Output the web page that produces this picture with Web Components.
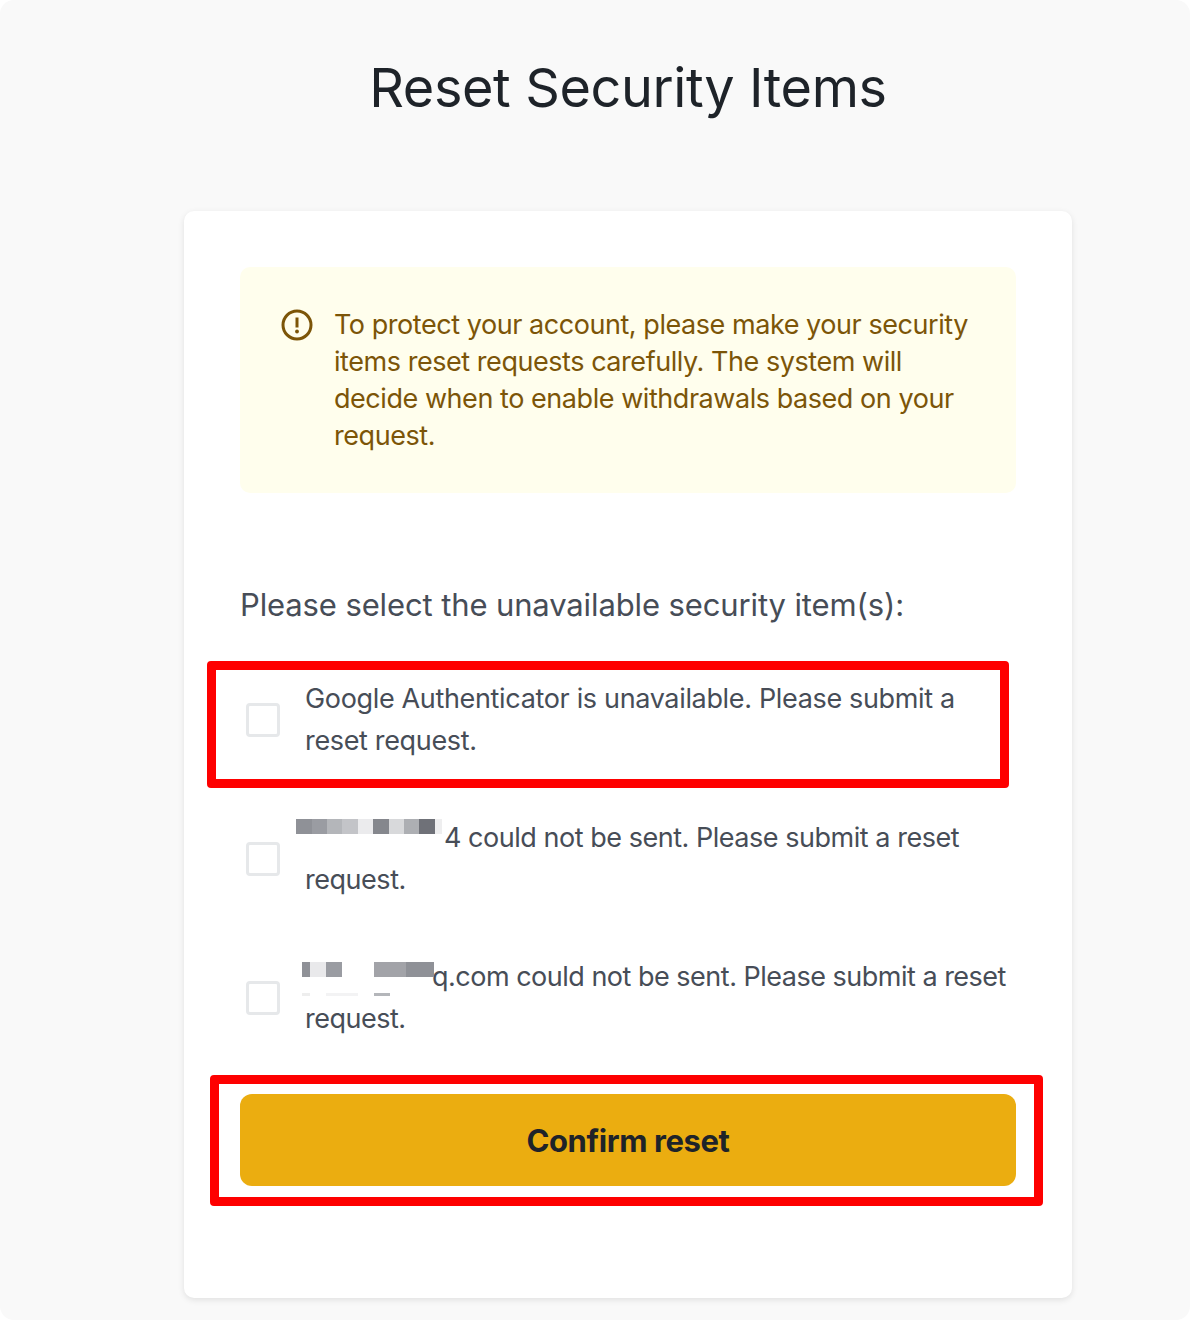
<!DOCTYPE html>
<html>
<head>
<meta charset="utf-8">
<title>Reset Security Items</title>
<style>
  html,body{margin:0;padding:0;background:#fff;}
  body{font-family:"Inter","Liberation Sans",sans-serif;}
</style>
</head>
<body>
<reset-page>
  <warning-box slot="warning">To protect your account, please make your security items reset requests carefully. The system will decide when to enable withdrawals based on your request.</warning-box>
  <option-row slot="option" marked>Google Authenticator is unavailable. Please submit a reset request.</option-row>
  <option-row slot="option" style="letter-spacing:-.47px"><pixel-blur cells="#8f9197:16,#9a9ca2:15,#b4b6ba:15,#c3c4c8:16,#ebebed:15,#85878d:16,#d8d9db:15,#adafb3:15,#6f7178:16,#eeeeef:7" width="139" offset="-9" top="-27"></pixel-blur>4 could not be sent. Please submit a reset request.</option-row>
  <option-row slot="option" style="letter-spacing:-.5px"><pixel-blur cells="#8f9197:8,#e9e9eb:16,#9a9ca2:16,#fff:32,#a2a3a8:32,#8f9197:28" low="#eee:8,#fff:16,#f3f3f4:32,#fff:16,#b4b6ba:16" width="127" offset="-3" top="-23"></pixel-blur>q.com could not be sent. Please submit a reset request.</option-row>
  <confirm-button slot="button" marked>Confirm reset</confirm-button>
</reset-page>

<script>
class ResetPage extends HTMLElement{
  constructor(){
    super();
    this.attachShadow({mode: 'open'});
  }
  connectedCallback(){
    this.shadowRoot.innerHTML = `
    <style>
      :host{
        display: block;
        width: 1190px;
        height: 1320px;
        box-sizing: border-box;
        background: #f9f9f9;
        border-radius: 14px;
        padding-left: 184px;
        overflow: hidden;
      }
      h1{
        width: 888px;
        margin: 0;
        height: 211px;
        box-sizing: border-box;
        padding-top: 54px;
        text-align: center;
        font-size: 54px;
        line-height: 68px;
        font-weight: 400;
        letter-spacing: -.4px;
        color: #1e2329;
      }
      .card{
        width: 888px;
        height: 1087px;
        box-sizing: border-box;
        padding: 56px;
        background: #fff;
        border-radius: 10px;
        box-shadow: 0 2px 6px rgba(0,0,0,.1);
      }
      p{
        margin: 0;
        padding: 92px 0 0;
        height: 185px;
        box-sizing: border-box;
        font-size: 31px;
        line-height: 40px;
        letter-spacing: -.12px;
        color: #474d57;
      }
      .items{
        display: flex;
        flex-direction: column;
        row-gap: 55px;
      }
      .btn{margin-top: 54px;}
    </style>
    <h1>Reset Security Items</h1>
    <div class="card">
      <slot name="warning"></slot>
      <p>Please select the unavailable security item(s):</p>
      <div class="items"><slot name="option"></slot></div>
      <div class="btn"><slot name="button"></slot></div>
    </div>`;
  }
}

class WarningBox extends HTMLElement{
  constructor(){
    super();
    this.attachShadow({mode: 'open'});
  }
  connectedCallback(){
    this.shadowRoot.innerHTML = `
    <style>
      :host{
        display: flex;
        height: 226px;
        box-sizing: border-box;
        padding: 39px 40px 0 42px;
        column-gap: 20px;
        background: #fffeed;
        border-radius: 10px;
        color: #7c5508;
        font-size: 27px;
        line-height: 37px;
        letter-spacing: -.45px;
      }
      svg{flex: none; width: 32px; height: 32px; margin-top: 3px; margin-left: -1px; margin-right: 1px;}
    </style>
    <svg viewBox="0 0 32 32" fill="none">
      <circle cx="16" cy="16" r="14" stroke="#7c5508" stroke-width="3"/>
      <path d="M16 8.5v10" stroke="#7c5508" stroke-width="3"/>
      <circle cx="16" cy="22.5" r="1.9" fill="#7c5508"/>
    </svg>
    <div><slot></slot></div>`;
  }
}

class OptionRow extends HTMLElement{
  constructor(){
    super();
    this.attachShadow({mode: 'open'});
  }
  connectedCallback(){
    this.shadowRoot.innerHTML = `
    <style>
      :host{
        display: flex;
        position: relative;
        align-items: center;
        column-gap: 25px;
        padding-left: 6px;
        height: 84px;
        width: 770px;
        font-size: 27px;
        line-height: 42px;
        letter-spacing: -.34px;
        color: #474d57;
      }
      .box{
        flex: none;
        width: 34px;
        height: 34px;
        box-sizing: border-box;
        border: 3px solid #e6e8ea;
        border-radius: 4px;
      }
      .frame{
        position: absolute;
        left: -33px;
        top: -17px;
        width: 802px;
        height: 127px;
        box-sizing: border-box;
        border: 9px solid #fe0000;
        border-radius: 4px;
      }
    </style>
    <div class="box"></div>
    <div><slot></slot></div>
    ${this.hasAttribute('marked') ? '<div class="frame"></div>' : ''}`;
  }
}

// "color:width,color:width" -> row of flat blocks
function blurCells(spec){
  return spec.split(',').map(c => {
    const [color, w] = c.split(':');
    return `<i style="background:${color};width:${w}px"></i>`;
  }).join('');
}

class PixelBlur extends HTMLElement{
  constructor(){
    super();
    this.attachShadow({mode: 'open'});
  }
  connectedCallback(){
    const offset = this.getAttribute('offset');
    const low = this.getAttribute('low');
    this.shadowRoot.innerHTML = `
    <style>
      :host{
        display: inline-block;
        position: relative;
        width: ${this.getAttribute('width')}px;
        height: 1px;
      }
      .strip{
        position: absolute;
        left: ${offset}px;
        top: ${this.getAttribute('top')}px;
        height: 15px;
        display: flex;
      }
      .low{
        position: absolute;
        left: ${offset}px;
        top: 8px;
        height: 3px;
        display: flex;
      }
      i{display: block; height: 100%;}
    </style>
    <div class="strip">${blurCells(this.getAttribute('cells'))}</div>
    ${low ? `<div class="low">${blurCells(low)}</div>` : ''}`;
  }
}

class ConfirmButton extends HTMLElement{
  constructor(){
    super();
    this.attachShadow({mode: 'open'});
  }
  connectedCallback(){
    this.shadowRoot.innerHTML = `
    <style>
      :host{display: block; position: relative;}
      button{
        display: block;
        width: 776px;
        height: 92px;
        border: 0;
        border-radius: 12px;
        background: #ebad10;
        color: #1e2329;
        font: 700 31px "Inter","Liberation Sans",sans-serif;
        letter-spacing: -.4px;
      }
      .frame{
        position: absolute;
        left: -30px;
        top: -19px;
        width: 833px;
        height: 131px;
        box-sizing: border-box;
        border: 9px solid #fe0000;
        border-radius: 4px;
      }
    </style>
    <button><slot></slot></button>
    ${this.hasAttribute('marked') ? '<div class="frame"></div>' : ''}`;
  }
}

customElements.define('warning-box', WarningBox);
customElements.define('option-row', OptionRow);
customElements.define('pixel-blur', PixelBlur);
customElements.define('confirm-button', ConfirmButton);
customElements.define('reset-page', ResetPage);
</script>
</body>
</html>
